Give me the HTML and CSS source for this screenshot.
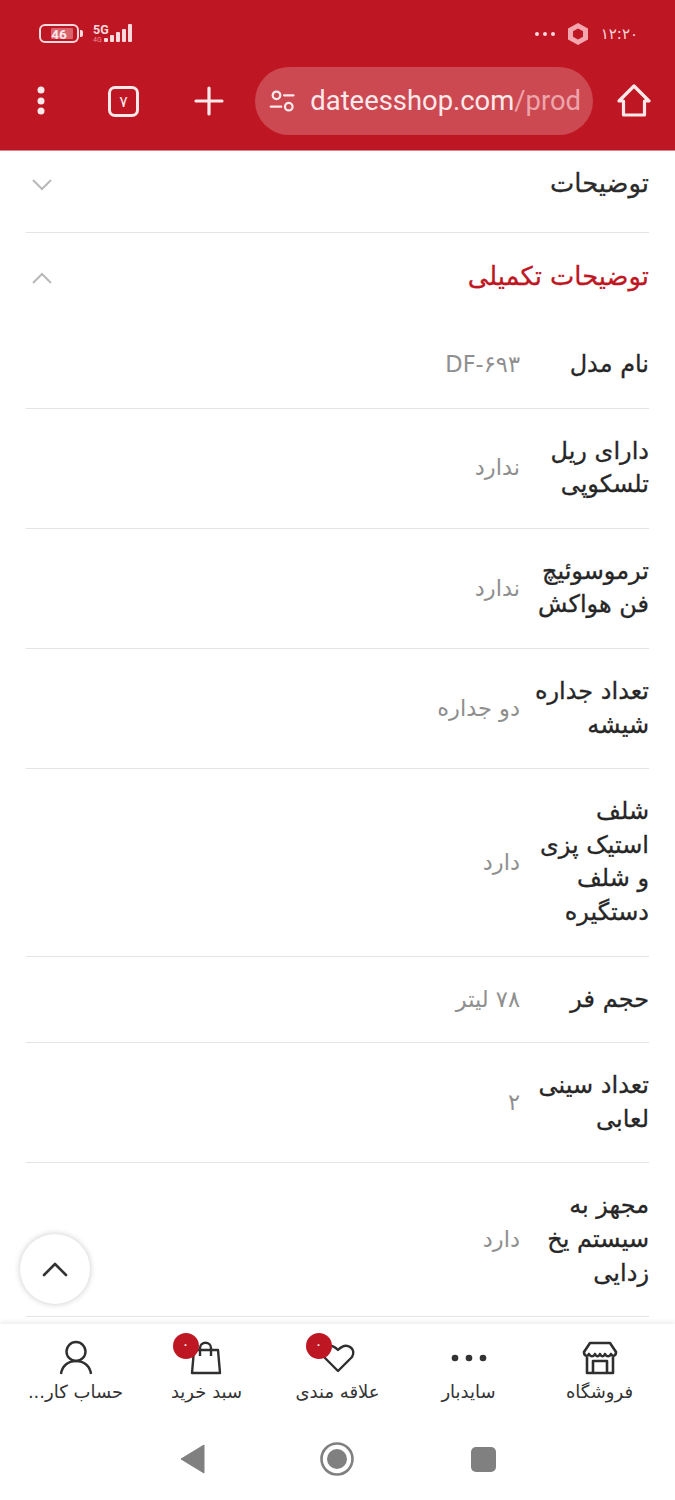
FILE: index.html
```html
<!DOCTYPE html>
<html lang="fa">
<head>
<meta charset="utf-8">
<title>dateesshop</title>
<link rel="stylesheet" href="styles.css">
</head>
<body>
<div class="screen">
  <header class="top">
    <div class="status">
      <div class="status-left">
        <div class="battery"><span class="battery-fill"></span><span class="battery-num">46</span><span class="battery-cap"></span></div>
        <div class="signal">
          <div class="net"><span class="net-5g">5G</span><span class="net-4g">4G</span></div>
          <svg class="bars" width="29" height="20" viewBox="0 0 29 20"><g fill="#fbd9dc"><rect x="0" y="14" width="4" height="4" rx="1"/><rect x="6" y="11" width="4" height="7" rx="1"/><rect x="12" y="8" width="4" height="10" rx="1"/><rect x="18" y="5" width="4" height="13" rx="1"/><rect x="24" y="0" width="4" height="18" rx="1"/></g></svg>
        </div>
      </div>
      <div class="status-right">
        <span class="dots-small"><i></i><i></i><i></i></span>
        <svg width="22" height="24" viewBox="0 0 22 24"><path d="M11 1 21 6.500V17.500L11 23 1 17.500V6.500Z" fill="#f3a6ad"/><path d="M11 6.500 16 9.300V14.800L11 17.500 6 14.800V9.300Z" fill="#be1622"/></svg>
        <span class="clock">۱۲:۲۰</span>
      </div>
    </div>
    <div class="toolbar">
      <svg class="menu-dots" width="12" height="32" viewBox="0 0 12 32"><g fill="#fde8ea"><circle cx="6" cy="5" r="3.500"/><circle cx="6" cy="16" r="3.500"/><circle cx="6" cy="26" r="3.500"/></g></svg>
      <div class="tabs">۷</div>
      <svg class="plus" width="30" height="30" viewBox="0 0 30 30"><path d="M15 2V28M2 15H28" stroke="#fde8ea" stroke-width="3.200" stroke-linecap="round"/></svg>
      <div class="url">
        <svg width="30" height="30" viewBox="0 0 30 30" fill="none" stroke="#fde8ea" stroke-width="2.400" stroke-linecap="round"><circle cx="9" cy="9" r="4"/><path d="M17 9H27M3 21H14"/><circle cx="22" cy="21" r="4"/></svg>
        <span class="url-text"><span class="url-host">dateesshop.com</span><span class="url-path">/prod</span></span>
      </div>
      <svg class="home" width="34" height="34" viewBox="0 0 34 34" fill="none" stroke="#fde8ea" stroke-width="3.200" stroke-linejoin="round" stroke-linecap="round"><path d="M2 17 17 2 32 17H27.500V31H6.500V17Z"/></svg>
    </div>
  </header>

  <main class="content">
    <section class="acc">
      <div class="acc-head">
        <h2 class="acc-title">توضیحات</h2>
        <svg class="chev" width="22" height="14" viewBox="0 0 22 14" fill="none" stroke="#b9b9b9" stroke-width="2"><path d="M2 2 11 11 20 2"/></svg>
      </div>
    </section>
    <section class="acc acc-open">
      <div class="acc-head">
        <h2 class="acc-title acc-title-red">توضیحات تکمیلی</h2>
        <svg class="chev" width="22" height="14" viewBox="0 0 22 14" fill="none" stroke="#b9b9b9" stroke-width="2"><path d="M2 12 11 3 20 12"/></svg>
      </div>
      <div class="row"><div class="key">نام مدل</div><div class="val">DF-۶۹۳</div></div>
      <div class="row"><div class="key">دارای ریل تلسکوپی</div><div class="val">ندارد</div></div>
      <div class="row"><div class="key">ترموسوئیچ فن هواکش</div><div class="val">ندارد</div></div>
      <div class="row"><div class="key">تعداد جداره شیشه</div><div class="val">دو جداره</div></div>
      <div class="row"><div class="key">شلف استیک پزی و شلف دستگیره</div><div class="val">دارد</div></div>
      <div class="row"><div class="key">حجم فر</div><div class="val">۷۸ لیتر</div></div>
      <div class="row"><div class="key">تعداد سینی لعابی</div><div class="val">۲</div></div>
      <div class="row"><div class="key">مجهز به سیستم یخ زدایی</div><div class="val">دارد</div></div>
    </section>
  </main>

  <button class="to-top" aria-label="top">
    <svg width="26" height="16" viewBox="0 0 26 16" fill="none" stroke="#333" stroke-width="2.600" stroke-linecap="round" stroke-linejoin="round"><path d="M2 14 13 3 24 14"/></svg>
  </button>

  <nav class="bottom">
    <div class="nav-items">
      <div class="nav-item">
        <svg width="36" height="36" viewBox="0 0 36 36" fill="none" stroke="#2f2f2f" stroke-width="2.600" stroke-linejoin="round"><path d="M8 3H28L34 12C34 16 30.500 17 29 14 27.500 17 24.500 17 23 14 21.500 17 19.500 17 18 14 16.500 17 14.500 17 13 14 11.500 17 8.500 17 7 14 5.500 17 2 16 2 12Z"/><path d="M5 17V33H31V17M11 33V21H25V33"/></svg>
        <span>فروشگاه</span>
      </div>
      <div class="nav-item">
        <svg width="36" height="36" viewBox="0 0 36 36" fill="#333"><circle cx="4" cy="18" r="3.300"/><circle cx="18" cy="18" r="3.300"/><circle cx="32" cy="18" r="3.300"/></svg>
        <span>سایدبار</span>
      </div>
      <div class="nav-item">
        <div class="nav-icon">
          <svg width="36" height="36" viewBox="0 0 36 36" fill="none" stroke="#2f2f2f" stroke-width="2.400" stroke-linejoin="round"><path d="M18 31 4 17C-1 9 9 1 18 10 27 1 37 9 32 17Z"/></svg>
          <b class="badge">۰</b>
        </div>
        <span>علاقه مندی</span>
      </div>
      <div class="nav-item">
        <div class="nav-icon nav-icon-bag">
          <svg width="36" height="36" viewBox="0 0 36 36" fill="none" stroke="#2f2f2f" stroke-width="2.400" stroke-linejoin="round"><path d="M7 10H31L33 33H5Z"/><path d="M13 16V8C13 1 24 1 24 8V16"/></svg>
          <b class="badge">۰</b>
        </div>
        <span>سبد خرید</span>
      </div>
      <div class="nav-item">
        <svg width="36" height="36" viewBox="0 0 36 36" fill="none" stroke="#2f2f2f" stroke-width="2.400"><circle cx="18" cy="11.500" r="9.500"/><path d="M3 34C4 26 10 21 18 21S32 26 33 34"/></svg>
        <span>حساب کار...</span>
      </div>
    </div>
    <div class="sys">
      <svg width="26" height="30" viewBox="0 0 26 30"><path d="M24 1V29L1 15Z" fill="#808080" stroke="#808080" stroke-linejoin="round"/></svg>
      <svg width="34" height="34" viewBox="0 0 34 34"><circle cx="17" cy="17" r="15.500" fill="none" stroke="#808080" stroke-width="2.600"/><circle cx="17" cy="17" r="10" fill="#808080"/></svg>
      <span class="sys-square"></span>
    </div>
  </nav>
</div>
</body>
</html>
```

FILE: styles.css
```css
* { box-sizing: border-box; }
html, body { margin: 0; padding: 0; }
body { background: #fff; font-family: "DejaVu Sans", "Noto Sans", sans-serif; }

.screen {
  position: relative;
  width: 675px;
  height: 1500px;
  display: flex;
  flex-direction: column;
  overflow: hidden;
}

.top {
  height: 151px;
  flex: none;
  background: #be1622;
  border-bottom: 1px solid #d9828a;
  padding: 0 25px 0 32px;
}
.status {
  height: 67px;
  display: flex;
  justify-content: space-between;
  align-items: center;
  padding: 0 12px 0 7px;
  color: #fbd9dc;
}
.status-left { display: flex; align-items: center; gap: 14px; }
.battery {
  position: relative;
  width: 40px;
  height: 19px;
  border: 2px solid #fbd9dc;
  border-radius: 6px;
  display: flex;
  align-items: center;
  justify-content: center;
}
.battery-fill {
  position: absolute;
  left: 10px; top: 2px; bottom: 2px; right: 4px;
  background: #d9646e;
  border-radius: 1px;
}
.battery-num {
  position: relative;
  font: 700 13.500px "Roboto", sans-serif;
  color: #fde8ea;
}
.battery-cap {
  position: absolute;
  right: -6px; top: 4px;
  width: 3px; height: 7px;
  background: #fbd9dc;
  border-radius: 0 2px 2px 0;
}
.signal { display: flex; align-items: flex-end; gap: 0; }
.net { display: flex; flex-direction: column; line-height: 1; font-family: "Roboto", sans-serif; margin-right: -5px; }
.net-5g { font-size: 12.500px; font-weight: 700; }
.net-4g { font-size: 7px; color: #ee8f98; }
.status-right { display: flex; align-items: center; gap: 12px; }
.dots-small { display: flex; gap: 4px; }
.dots-small i { width: 4px; height: 4px; border-radius: 50%; background: #fbd9dc; }
.clock { font-size: 15px; letter-spacing: 0.500px; }

.toolbar {
  height: 68px;
  display: flex;
  align-items: center;
}
.menu-dots { flex: none; margin-left: 3px; }
.tabs {
  flex: none;
  width: 31px;
  height: 31px;
  margin-left: 61px;
  border: 3px solid #fde8ea;
  border-radius: 7px;
  color: #fde8ea;
  font-size: 16px;
  display: flex;
  align-items: center;
  justify-content: center;
}
.plus { flex: none; margin-left: 55px; }
.url {
  flex: none;
  width: 338px;
  height: 68px;
  margin-left: 31px;
  border-radius: 34px;
  background: rgba(255, 255, 255, 0.22);
  display: flex;
  align-items: center;
  gap: 14px;
  padding: 0 12px 0 13px;
}
.url-text {
  font: 400 27.400px "Roboto", sans-serif;
  white-space: nowrap;
}
.url-host { color: #fde8ea; }
.url-path { color: #eda5ab; }
.home { flex: none; margin-left: 24px; }

.content { flex: 1; min-height: 0; overflow: hidden; padding: 0 26px; color: #2b2b2b; }
.acc { direction: rtl; border-bottom: 1px solid #e4e4e4; }
.acc-open { border-bottom: 0; }
.acc-head {
  height: 81px;
  display: flex;
  align-items: center;
  justify-content: space-between;
  padding: 0 0 14px 5px;
}
.acc-open .acc-head { height: 89px; padding-bottom: 0; padding-top: 0; }
.acc-title {
  margin: -3px 0 0;
  font-size: 25.800px;
  font-weight: 400;
  line-height: 34px;
  -webkit-text-stroke: 0.300px currentColor;
}
.acc-title-red { color: #be1622; }

.row {
  display: flex;
  align-items: center;
  gap: 10px;
  padding: 26px 0;
  border-bottom: 1px solid #e4e4e4;
}
.key {
  flex: none;
  width: 119px;
  font-size: 24px;
  line-height: 33.600px;
  color: #262626;
  -webkit-text-stroke: 0.300px currentColor;
}
.val { font-size: 22.500px; line-height: 33.600px; color: #8f8f8f; }

.to-top {
  position: absolute;
  left: 20px;
  top: 1234px;
  width: 70px;
  height: 70px;
  padding: 0;
  border: 0;
  border-radius: 50%;
  background: #fff;
  box-shadow: 0 0 6px rgba(0, 0, 0, 0.22);
  display: flex;
  align-items: center;
  justify-content: center;
}

.bottom {
  position: absolute;
  left: 0; right: 0; bottom: 0;
  height: 176px;
  background: #fff;
  box-shadow: 0 -2px 5px rgba(0, 0, 0, 0.08);
}
.nav-items {
  height: 88px;
  display: flex;
  flex-direction: row-reverse;
  padding: 16px 10px 0;
}
.nav-item {
  width: 131px;
  display: flex;
  flex-direction: column;
  align-items: center;
  gap: 2px;
  font-size: 18px;
  line-height: 28px;
  color: #333;
  direction: rtl;
}
.nav-icon { position: relative; width: 36px; height: 36px; }
.nav-icon-bag { left: -2px; }
.badge {
  position: absolute;
  left: -14px;
  top: -7px;
  width: 26px;
  height: 26px;
  border-radius: 50%;
  background: #be1622;
  color: #fff;
  font-size: 14px;
  font-weight: 400;
  line-height: 22px;
  text-align: center;
}
.sys {
  height: 88px;
  display: flex;
  align-items: center;
  padding-left: 180px;
  padding-top: 6px;
  gap: 114px;
}
.sys-square { width: 25px; height: 25px; border-radius: 5px; background: #808080; margin-left: 3px; }
```
